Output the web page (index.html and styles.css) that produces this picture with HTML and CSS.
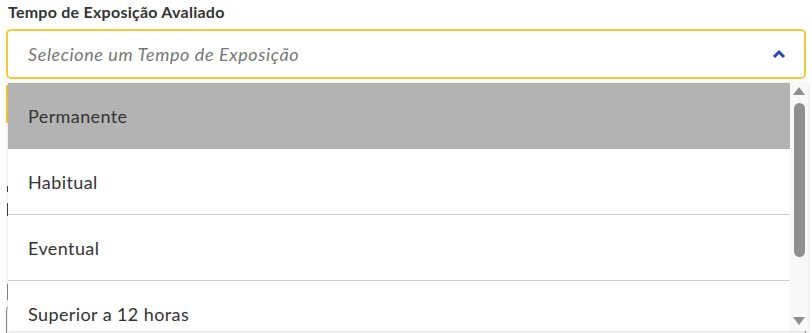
FILE: index.html
```html
<!DOCTYPE html>
<html lang="pt-BR">

<head>
    <meta charset="UTF-8">
    <meta name="viewport" content="width=device-width, initial-scale=1.0">
    <title>Tempo de Exposição</title>
    <link rel="stylesheet" href="styles.css">
</head>

<body>
    <div class="field">
        <label class="field-label">Tempo de Exposição Avaliado</label>
        <div class="select">
            <span class="select-placeholder">Selecione um Tempo de Exposição</span>
            <svg class="select-chevron" width="14" height="10" viewBox="0 0 14 10">
                <path d="M2 8 L7 3 L12 8" fill="none" stroke="#2645b3" stroke-width="3" />
            </svg>
        </div>

        <!-- form that sits under the open menu, only its left edge shows -->
        <div class="behind">
            <div class="behind-alert"></div>
            <div class="behind-mark behind-mark-a"></div>
            <div class="behind-mark behind-mark-i"></div>
            <div class="behind-rule"></div>
            <div class="behind-input"></div>
        </div>

        <div class="menu">
            <ul class="menu-list">
                <li class="menu-item active">Permanente</li>
                <li class="menu-item">Habitual</li>
                <li class="menu-item">Eventual</li>
                <li class="menu-item">Superior a 12 horas</li>
            </ul>
            <div class="scrollbar">
                <span class="scroll-up"></span>
                <span class="scroll-thumb"></span>
                <span class="scroll-down"></span>
            </div>
        </div>
    </div>
</body>

</html>
```

FILE: styles.css
```css
html,
body {
    overflow: hidden;
}

body {
    margin: 0;
    background-color: #fff;
    font-family: Lato, "Open Sans", sans-serif;
    color: #333;
}

.field {
    position: relative;
    padding: 0 6px;
}

.field-label {
    display: block;
    padding: 1px 0 0 2px;
    font-size: 16px;
    font-weight: 700;
    line-height: 22px;
    letter-spacing: 0.25px;
    color: #333;
}

.select {
    display: flex;
    align-items: center;
    justify-content: space-between;
    box-sizing: border-box;
    height: 50px;
    margin-top: 6px;
    padding: 0 18px 0 20px;
    border: 2px solid #f6c93a;
    border-radius: 5px;
}

.select-placeholder {
    font-size: 18px;
    font-style: italic;
    letter-spacing: 0.6px;
    color: #777;
}

.select-chevron {
    display: block;
}

.behind {
    padding-top: 6px;
}

.behind-alert {
    height: 38px;
    border-left: 2px solid #f6c93a;
}

.behind-mark {
    width: 2px;
    margin-left: 1px;
    background-color: #444;
}

.behind-mark-a {
    height: 6px;
    margin-top: 63px;
}

.behind-mark-i {
    height: 13px;
    margin-top: 11px;
}

.behind-rule {
    height: 16px;
    margin-top: 68px;
    margin-left: 1px;
    border-left: 1px solid #888;
}

.behind-input {
    height: 30px;
    margin-top: 5px;
    border: 1px solid #888;
    border-radius: 5px;
}

.menu {
    position: absolute;
    top: 82px;
    left: 8px;
    width: 800px;
    height: 249px;
    display: flex;
    background-color: #fff;
    box-shadow: 0 1px 3px rgba(0, 0, 0, 0.15);
    overflow: hidden;
}

.menu-list {
    flex: 1;
    margin: 0;
    padding: 0;
    list-style: none;
    border-top: 1px solid #f0f0f0;
}

.menu-item {
    box-sizing: border-box;
    height: 66px;
    padding-left: 20px;
    display: flex;
    align-items: center;
    font-size: 18px;
    letter-spacing: 0.4px;
    color: #333;
    border-bottom: 1px solid #cfcfcf;
}

.menu-item.active {
    background-color: #b3b3b3;
    border-bottom-color: #b3b3b3;
}

.scrollbar {
    width: 18px;
    display: flex;
    flex-direction: column;
    align-items: center;
    background-color: #f8f8f8;
}

.scroll-up,
.scroll-down {
    width: 0;
    height: 0;
    border-left: 6px solid transparent;
    border-right: 6px solid transparent;
}

.scroll-up {
    margin-top: 5px;
    border-bottom: 8px solid #8e8e8e;
}

.scroll-thumb {
    width: 11px;
    height: 154px;
    margin-top: 8px;
    border-radius: 6px;
    background-color: #8f8f8f;
}

.scroll-down {
    margin-top: auto;
    margin-bottom: 6px;
    border-top: 8px solid #8e8e8e;
}
```
